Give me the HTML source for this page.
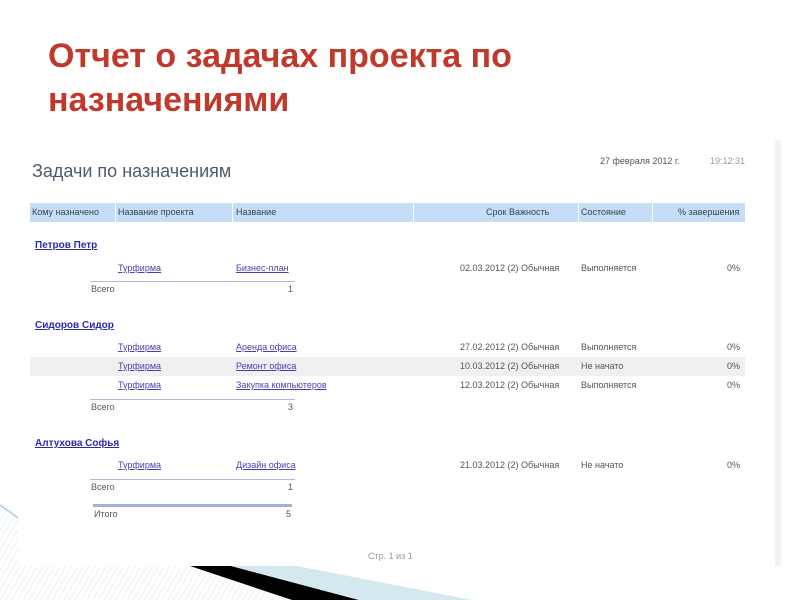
<!DOCTYPE html>
<html><head><meta charset="utf-8"><style>
body{margin:0;width:800px;height:600px;position:relative;overflow:hidden;background:#fff;font-family:"Liberation Sans","Noto Sans CJK SC",sans-serif}
.a{position:absolute;white-space:nowrap}
h1{position:absolute;left:48px;top:34px;margin:0;font-size:34px;line-height:44px;color:#c0392b;font-weight:bold}
.s{font-size:9px;color:#555}
.l{font-size:9px;color:#4a3fb0;text-decoration:underline}
.n{font-size:10px;font-weight:bold;color:#2a2ab0;text-decoration:underline}
.ln{position:absolute;height:1px;background:#a9bfd8}
</style></head><body>
<svg class="a" style="left:0;top:0" width="800" height="600">
<defs><pattern id="h" width="5" height="5" patternUnits="userSpaceOnUse" patternTransform="rotate(30)"><rect width="5" height="5" fill="#fff"/><line x1="0" y1="0" x2="0" y2="5" stroke="#d6e4ec" stroke-width="1"/></pattern></defs>
<polygon points="0,500 18,515 18,566 190,566 292,600 0,600" fill="url(#h)"/>
<line x1="0" y1="505" x2="18" y2="518" stroke="#a8cfe0" stroke-width="1.5"/>
<polygon points="190,566 231,566 359,600 292,600" fill="#000"/>
<polygon points="231,566 297,566 472,600 359,600" fill="#d4e8f0"/>
<rect x="775" y="140" width="6" height="426" fill="#f3f3f3"/>
</svg>
<h1>Отчет о задачах проекта по<br>назначениями</h1>
<div class="a" style="left:32px;top:161px;font-size:18px;color:#4d5b6b">Задачи по назначениям</div>
<div class="a s" style="left:600px;top:156px">27 февраля 2012 г.</div>
<div class="a s" style="left:710px;top:156px;color:#999">19:12:31</div>
<div class="a" style="left:30px;top:203px;width:715px;height:19px;background:#c6dcf7"></div>
<div class="a" style="left:115px;top:203px;width:1px;height:19px;background:#fff"></div>
<div class="a" style="left:232px;top:203px;width:1px;height:19px;background:#fff"></div>
<div class="a" style="left:413px;top:203px;width:1px;height:19px;background:#fff"></div>
<div class="a" style="left:578px;top:203px;width:1px;height:19px;background:#fff"></div>
<div class="a" style="left:652px;top:203px;width:1px;height:19px;background:#fff"></div>
<div class="a s" style="left:32px;top:207px;color:#345">Кому назначено</div>
<div class="a s" style="left:118px;top:207px;color:#345">Название проекта</div>
<div class="a s" style="left:236px;top:207px;color:#345">Название</div>
<div class="a s" style="left:486px;top:207px;color:#345">Срок Важность</div>
<div class="a s" style="left:581px;top:207px;color:#345">Состояние</div>
<div class="a s" style="left:678px;top:207px;color:#345">% завершения</div>

<div class="a n" style="left:35px;top:240px">Петров Петр</div>
<div class="a l" style="left:118px;top:263px">Турфирма</div>
<div class="a l" style="left:236px;top:263px">Бизнес-план</div>
<div class="a s" style="left:460px;top:263px">02.03.2012 (2) Обычная</div>
<div class="a s" style="left:581px;top:263px">Выполняется</div>
<div class="a s" style="left:727px;top:263px">0%</div>
<div class="ln" style="left:90px;top:281px;width:205px"></div>
<div class="a s" style="left:91px;top:284px">Всего</div>
<div class="a s" style="left:288px;top:284px">1</div>

<div class="a n" style="left:35px;top:320px">Сидоров Сидор</div>
<div class="a" style="left:30px;top:357px;width:715px;height:19px;background:#f0f0f0"></div>
<div class="a l" style="left:118px;top:342px">Турфирма</div>
<div class="a l" style="left:236px;top:342px">Аренда офиса</div>
<div class="a s" style="left:460px;top:342px">27.02.2012 (2) Обычная</div>
<div class="a s" style="left:581px;top:342px">Выполняется</div>
<div class="a s" style="left:727px;top:342px">0%</div>
<div class="a l" style="left:118px;top:361px">Турфирма</div>
<div class="a l" style="left:236px;top:361px">Ремонт офиса</div>
<div class="a s" style="left:460px;top:361px">10.03.2012 (2) Обычная</div>
<div class="a s" style="left:581px;top:361px">Не начато</div>
<div class="a s" style="left:727px;top:361px">0%</div>
<div class="a l" style="left:118px;top:380px">Турфирма</div>
<div class="a l" style="left:236px;top:380px">Закупка компьютеров</div>
<div class="a s" style="left:460px;top:380px">12.03.2012 (2) Обычная</div>
<div class="a s" style="left:581px;top:380px">Выполняется</div>
<div class="a s" style="left:727px;top:380px">0%</div>
<div class="ln" style="left:90px;top:399px;width:205px"></div>
<div class="a s" style="left:91px;top:402px">Всего</div>
<div class="a s" style="left:288px;top:402px">3</div>

<div class="a n" style="left:35px;top:438px">Алтухова Софья</div>
<div class="a l" style="left:118px;top:460px">Турфирма</div>
<div class="a l" style="left:236px;top:460px">Дизайн офиса</div>
<div class="a s" style="left:460px;top:460px">21.03.2012 (2) Обычная</div>
<div class="a s" style="left:581px;top:460px">Не начато</div>
<div class="a s" style="left:727px;top:460px">0%</div>
<div class="ln" style="left:90px;top:479px;width:205px"></div>
<div class="a s" style="left:91px;top:482px">Всего</div>
<div class="a s" style="left:288px;top:482px">1</div>
<div class="a" style="left:93px;top:504px;width:199px;height:3px;background:#9fb6d3"></div>
<div class="a s" style="left:94px;top:509px">Итого</div>
<div class="a s" style="left:286px;top:509px">5</div>
<div class="a s" style="left:368px;top:551px;color:#999">Стр. 1 из 1</div>
</body></html>
